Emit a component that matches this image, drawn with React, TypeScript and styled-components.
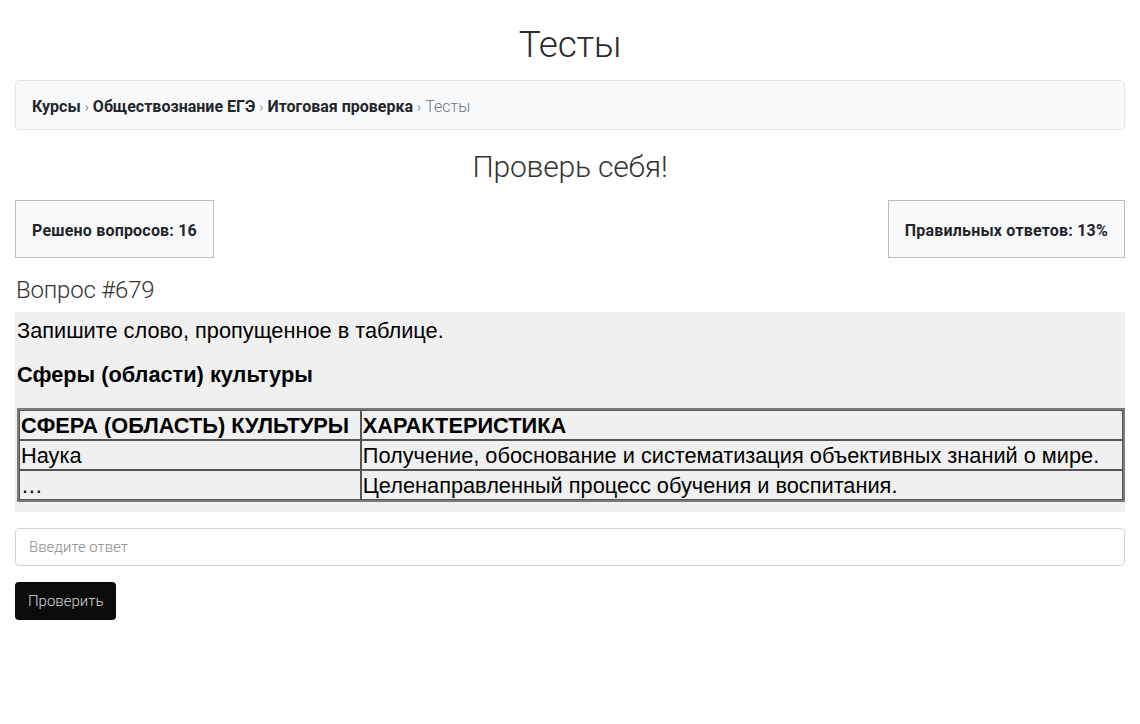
import React from "react";
import styled, { createGlobalStyle } from "styled-components";

const GlobalStyle = createGlobalStyle`
  body {
    margin: 0;
    background: #fff;
    font-family: Roboto, "Noto Sans", sans-serif;
    color: #212529;
  }
`;

const Container = styled.div`
  padding: 0 15px;
  display: flex;
  flex-direction: column;
`;

const PageTitle = styled.h1`
  margin: 23px 0 13px;
  font-size: 37px;
  font-weight: 300;
  line-height: 44px;
  text-align: center;
  color: #2a2a2a;
  letter-spacing: -0.3px;
`;

const Breadcrumbs = styled.nav`
  display: flex;
  align-items: center;
  box-sizing: border-box;
  height: 50px;
  padding: 3px 16px 0;
  background: #f8f9fa;
  border: 1px solid #e2e4e7;
  border-radius: 4px;
  font-size: 16px;
`;

const Crumb = styled.span<{ $active?: boolean }>`
  font-weight: ${(p) => (p.$active ? 300 : 700)};
  color: ${(p) => (p.$active ? "#6c757d" : "#212529")};
`;

const Sep = styled.span`
  color: #6c757d;
  font-weight: 300;
  padding: 0 4px;
  font-size: 14px;
`;

const SubTitle = styled.h2`
  margin: 18px 0 14px;
  font-size: 30px;
  font-weight: 300;
  line-height: 38px;
  text-align: center;
  color: #333;
  letter-spacing: -0.2px;
`;

const StatsRow = styled.div`
  display: flex;
  justify-content: space-between;
`;

const StatBox = styled.div`
  display: flex;
  align-items: center;
  box-sizing: border-box;
  height: 58px;
  padding: 3px 16px 0;
  background: #f8f9fa;
  border: 1px solid #bdbdbd;
  font-size: 16px;
  font-weight: 700;
  letter-spacing: 0.2px;
`;

const QuestionTitle = styled.h3`
  margin: 17px 0 7px 1px;
  font-size: 24px;
  font-weight: 300;
  line-height: 30px;
  color: #333;
  letter-spacing: -0.2px;
`;

const QuestionBody = styled.div`
  background: #f0f0f0;
  padding: 6px 0 10px 2px;
  font-family: "Liberation Sans", Arial, sans-serif;
  color: #000;
  font-size: 21.75px;
`;

const Paragraph = styled.p<{ $bold?: boolean; $last?: boolean }>`
  margin: 0 0 ${(p) => (p.$last ? 0 : 18)}px;
  line-height: 26px;
  font-weight: ${(p) => (p.$bold ? 700 : 400)};
`;

const DataTable = styled.table`
  width: 100%;
  border-collapse: separate;
  border-spacing: 0;
  border: 2px solid #7a7a7a;
  margin-top: 20px;
  font-size: 21.75px;
`;

const Cell = styled.td<{ $head?: boolean }>`
  border: 1px solid #555;
  padding: 2px 1px 1px;
  line-height: 25px;
  font-weight: ${(p) => (p.$head ? 700 : 400)};
  white-space: nowrap;
`;

const AnswerInput = styled.input`
  margin-top: 16px;
  height: 38px;
  box-sizing: border-box;
  padding: 0 13px;
  border: 1px solid #ced4da;
  border-radius: 4px;
  font-family: Roboto, sans-serif;
  font-weight: 300;
  font-size: 15px;
  color: #495057;
  &::placeholder {
    color: #8a8a8a;
  }
`;

const SubmitButton = styled.button`
  align-self: flex-start;
  margin-top: 16px;
  height: 38px;
  padding: 0 13px;
  background: #0b0b0b;
  color: #d8d8d8;
  border: none;
  border-radius: 4px;
  font-family: Roboto, sans-serif;
  font-weight: 300;
  font-size: 15px;
`;

export default function App() {
  return (
    <>
      <GlobalStyle />
      <Container>
        <PageTitle>Тесты</PageTitle>
        <Breadcrumbs>
          <Crumb>Курсы</Crumb>
          <Sep>›</Sep>
          <Crumb>Обществознание ЕГЭ</Crumb>
          <Sep>›</Sep>
          <Crumb>Итоговая проверка</Crumb>
          <Sep>›</Sep>
          <Crumb $active>Тесты</Crumb>
        </Breadcrumbs>
        <SubTitle>Проверь себя!</SubTitle>
        <StatsRow>
          <StatBox>Решено вопросов: 16</StatBox>
          <StatBox>Правильных ответов: 13%</StatBox>
        </StatsRow>
        <QuestionTitle>Вопрос #679</QuestionTitle>
        <QuestionBody>
          <Paragraph>Запишите слово, пропущенное в таблице.</Paragraph>
          <Paragraph $bold $last>
            Сферы (области) культуры
          </Paragraph>
          <DataTable>
            <tbody>
              <tr>
                <Cell $head>СФЕРА (ОБЛАСТЬ) КУЛЬТУРЫ</Cell>
                <Cell $head>ХАРАКТЕРИСТИКА</Cell>
              </tr>
              <tr>
                <Cell>Наука</Cell>
                <Cell>
                  Получение, обоснование и систематизация объективных знаний о
                  мире.
                </Cell>
              </tr>
              <tr>
                <Cell>…</Cell>
                <Cell>Целенаправленный процесс обучения и воспитания.</Cell>
              </tr>
            </tbody>
          </DataTable>
        </QuestionBody>
        <AnswerInput placeholder="Введите ответ" />
        <SubmitButton>Проверить</SubmitButton>
      </Container>
    </>
  );
}
